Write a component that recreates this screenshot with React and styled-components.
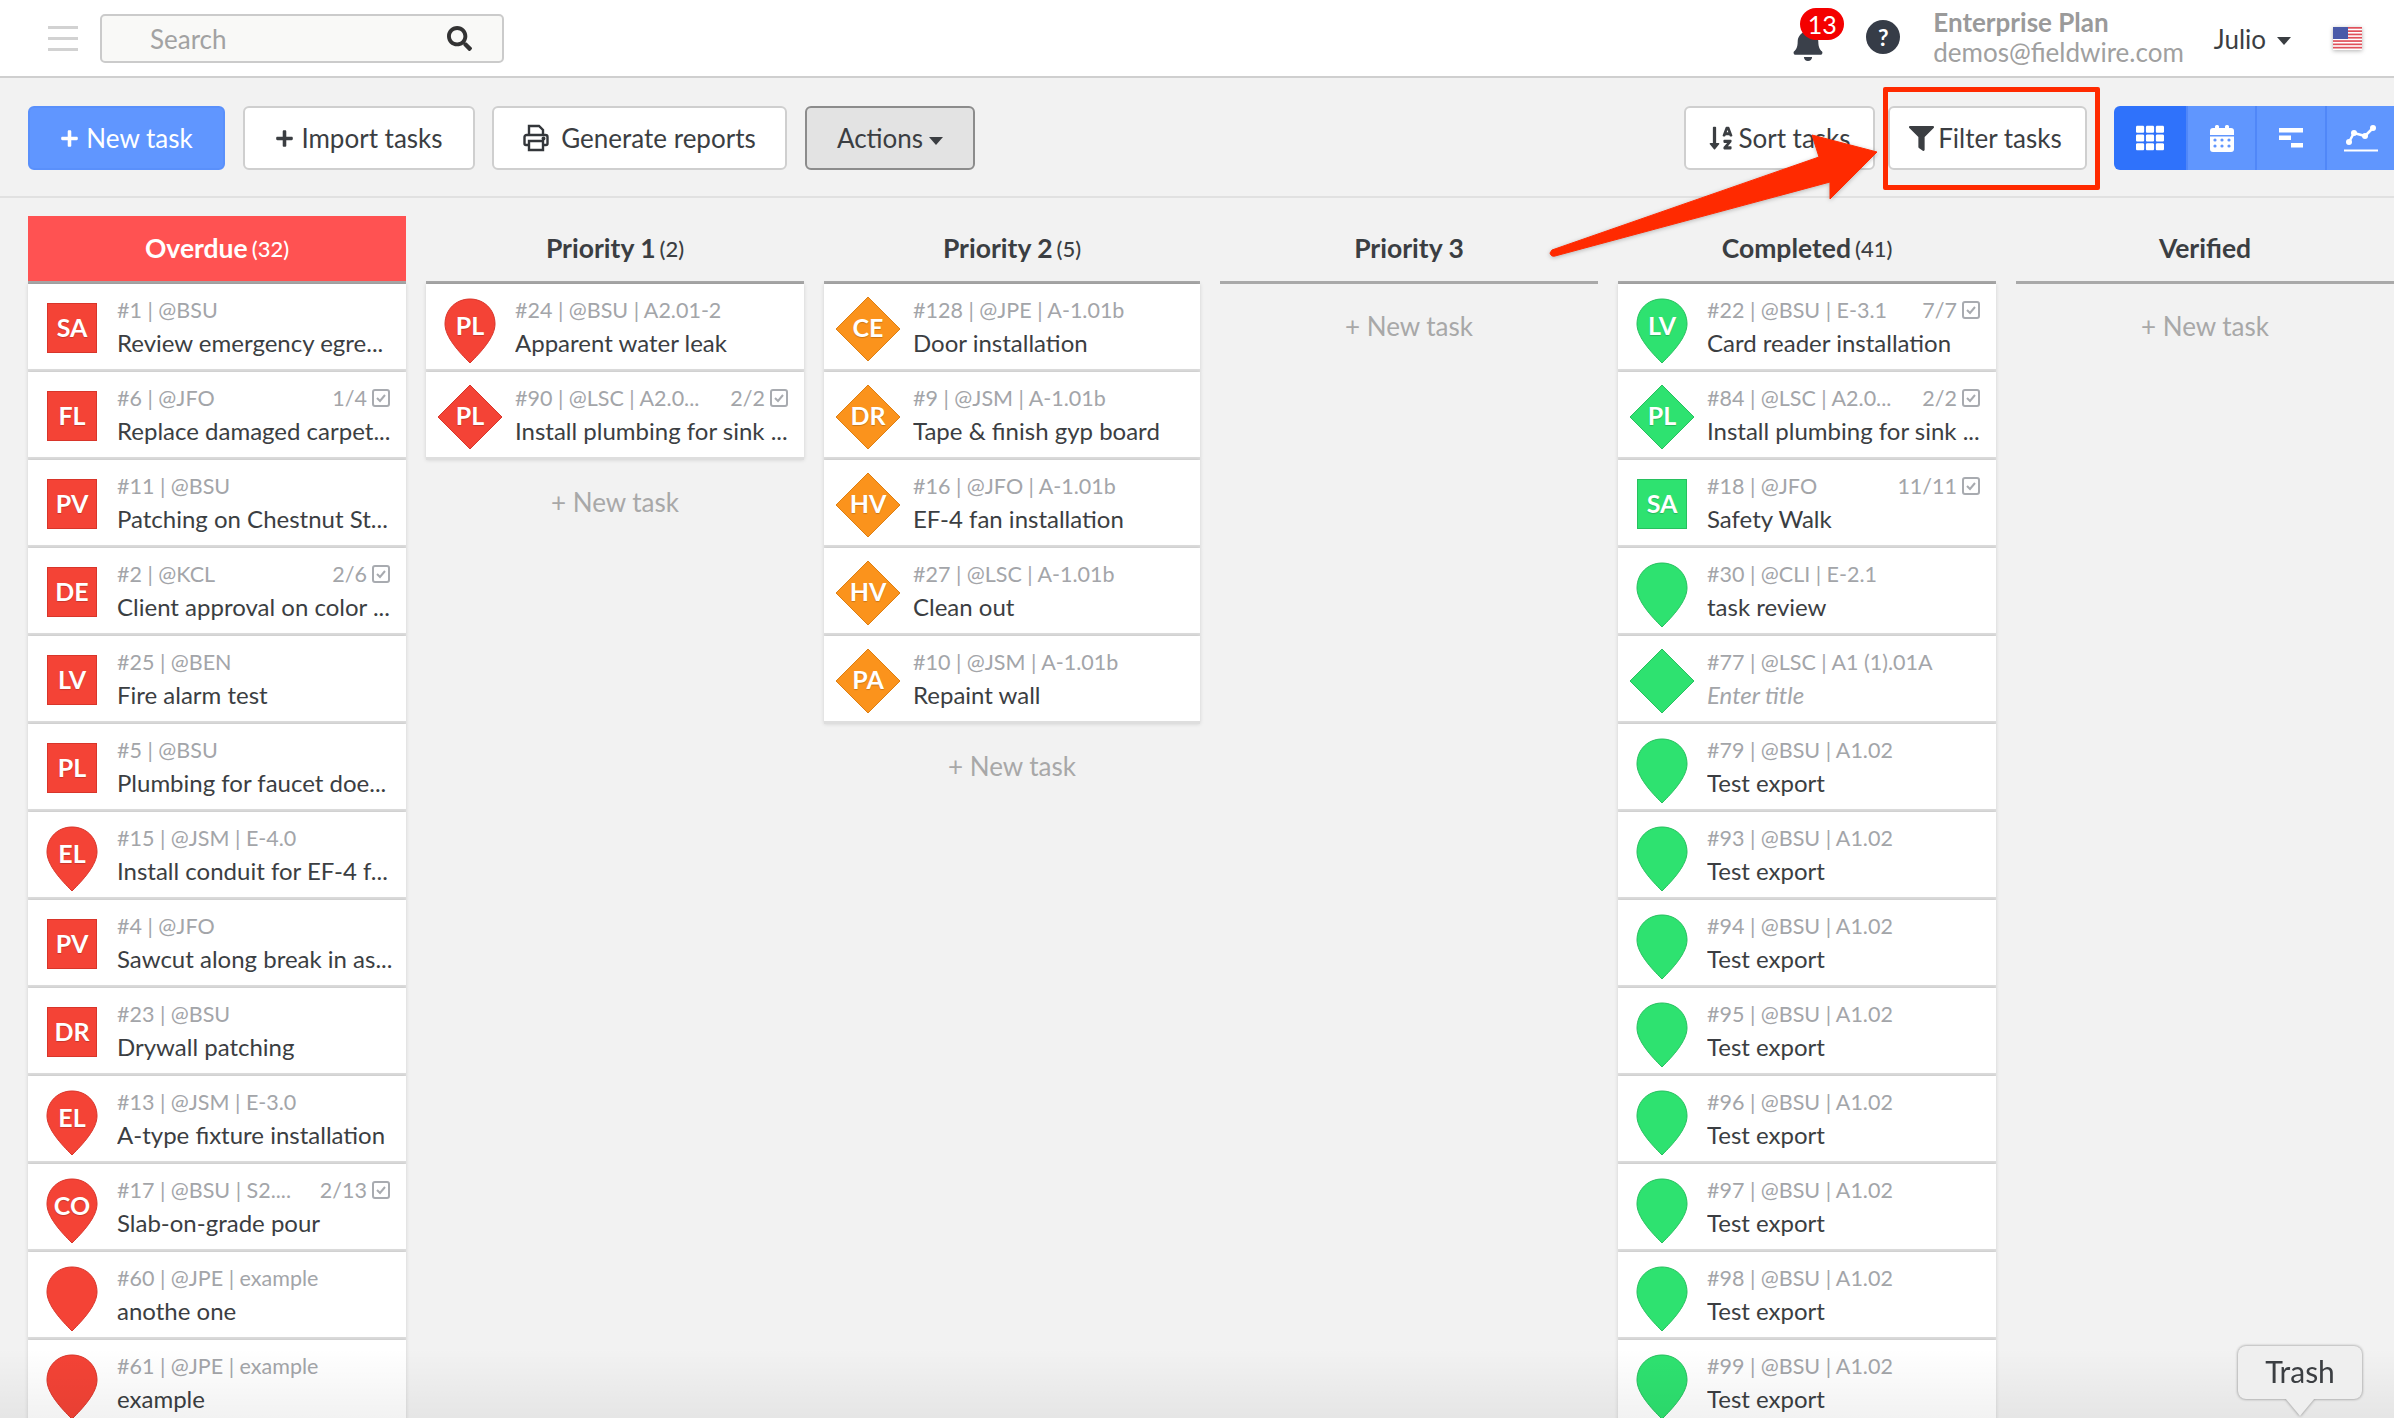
import styled, { createGlobalStyle } from 'styled-components';
import { FaSearch, FaBell, FaFilter, FaPlus, FaTh, FaSortAlphaDown } from 'react-icons/fa';

const GlobalStyle = createGlobalStyle`
  html, body {
    margin: 0;
    padding: 0;
    background: #f2f2f2;
    font-family: Lato, "Open Sans", sans-serif;
    color: #3b3e42;
  }
  * { box-sizing: border-box; }
`;

const colors = {
  red: { fill: '#f44336', edge: '#d8352a' },
  orange: { fill: '#fb931c', edge: '#dd7f13' },
  green: { fill: '#2ee270', edge: '#27c05f' },
};

const Page = styled.div`
  position: relative;
  width: 2394px;
  height: 1418px;
  overflow: hidden;
  background: #f2f2f2;
`;

const TopBar = styled.header`
  display: flex;
  align-items: center;
  height: 78px;
  padding: 1px 32px 0 48px;
  background: #fff;
  border-bottom: 2px solid #cfcfcf;
`;

const Burger = styled.div`
  display: flex;
  flex-direction: column;
  gap: 8px;
  width: 30px;
  margin-right: 22px;
  span {
    height: 3px;
    background: #d2d2d2;
  }
`;

const SearchBox = styled.form`
  display: flex;
  align-items: center;
  width: 404px;
  height: 49px;
  padding: 0 30px 0 48px;
  background: #f9f9f7;
  border: 2px solid #cbcbcb;
  border-radius: 5px;
  color: #333;
  font-size: 25px;
  input {
    flex: 1;
    min-width: 0;
    padding: 0;
    border: 0;
    outline: 0;
    background: transparent;
    font: 26px Lato, sans-serif;
  }
  input::placeholder {
    color: #a2a2a2;
    opacity: 1;
  }
`;

const TopRight = styled.div`
  display: flex;
  align-items: center;
  margin-left: auto;
`;

const BellWrap = styled.div`
  position: relative;
  display: flex;
  width: 30px;
  margin-top: 12px;
  color: #3a404a;
  font-size: 33px;
`;

const Badge = styled.span`
  position: absolute;
  left: 7px;
  top: -20px;
  width: 44px;
  height: 32px;
  border-radius: 16px;
  background: #f40000;
  color: #fff;
  font-size: 25px;
  line-height: 32px;
  text-align: center;
`;

const HelpDot = styled.div`
  width: 34px;
  height: 34px;
  margin: 0 0 3px 43px;
  border-radius: 50%;
  background: #363c47;
  color: #fff;
  font-size: 23px;
  font-weight: 700;
  line-height: 34px;
  text-align: center;
`;

const Plan = styled.div`
  margin: 0 0 3px 33px;
  color: #a0a0a0;
  font-size: 26px;
  line-height: 30px;
  b {
    display: block;
    font-weight: 700;
    color: #9a9a9a;
  }
`;

const User = styled.div`
  display: flex;
  align-items: center;
  gap: 11px;
  margin-left: 30px;
  color: #3b3e42;
  font-size: 26px;
`;

const Caret = styled.i`
  width: 0;
  height: 0;
  margin-top: 5px;
  border-left: 7px solid transparent;
  border-right: 7px solid transparent;
  border-top: 8px solid ${(p) => p.$color || '#3b3e42'};
`;

const Flag = styled.svg`
  display: block;
  width: 29px;
  height: 23px;
  margin-left: 42px;
  filter: blur(0.5px) drop-shadow(0 1px 2px rgba(0, 0, 0, 0.3));
`;

const ToolBar = styled.div`
  display: flex;
  align-items: center;
  height: 120px;
  padding: 2px 0 0 28px;
  border-bottom: 2px solid #e1e1e1;
`;

const Button = styled.button`
  display: flex;
  align-items: center;
  justify-content: center;
  gap: ${(p) => p.$gap || 7}px;
  width: ${(p) => p.$w}px;
  height: 64px;
  margin-right: ${(p) => p.$mr || 0}px;
  padding: 0 ${(p) => p.$pr || 0}px 0 0;
  background: ${(p) => (p.$primary ? '#6096ff' : p.$muted ? '#e3e3e3' : '#fff')};
  border: 2px solid ${(p) => (p.$primary ? '#5a90fb' : p.$muted ? '#8c8c8c' : '#cfcfcf')};
  border-radius: 6px;
  color: ${(p) => (p.$primary ? '#fff' : '#3b3e42')};
  font: 26px Lato, sans-serif;
`;

const Spacer = styled.div`
  flex: 1;
`;

const ViewGroup = styled.div`
  display: flex;
  width: 280px;
  height: 64px;
  margin-left: 27px;
  border-radius: 6px 0 0 6px;
  overflow: hidden;
`;

const ViewTab = styled.div`
  display: flex;
  align-items: center;
  justify-content: center;
  flex: 0 0 ${(p) => p.$w}px;
  background: ${(p) => (p.$active ? '#2f72fb' : '#6096fe')};
  border-left: ${(p) => (p.$active ? 0 : 2)}px solid #5087f8;
  color: #fff;
  font-size: 28px;
`;

const Board = styled.main`
  display: flex;
  gap: 20px;
  padding: 18px 0 0 28px;
`;

const Column = styled.section`
  flex: 0 0 ${(p) => p.$w || 378}px;
  min-width: 0;
`;

const ColumnHead = styled.div`
  display: flex;
  align-items: center;
  justify-content: center;
  gap: 4px;
  height: 68px;
  padding-bottom: 2px;
  background: ${(p) => (p.$alert ? '#ff5252' : 'transparent')};
  border-bottom: 3px solid #a9a9a9;
  color: ${(p) => (p.$alert ? '#fff' : '#3b3e42')};
  font-size: 26.5px;
  font-weight: 700;
  small {
    margin-top: 2px;
    font-size: 22px;
    font-weight: 500;
  }
`;

const Card = styled.article`
  display: flex;
  height: 88px;
  padding: 0 16px 0 11px;
  background: #fff;
  border-bottom: 3px solid #dedede;
  box-shadow: 0 0 4px rgba(0, 0, 0, 0.14);
`;

const IconBox = styled.div`
  display: grid;
  flex: 0 0 66px;
  height: 66px;
  margin: 12px 12px 0 0;
  place-items: center;
  > * {
    grid-area: 1 / 1;
  }
`;

const Square = styled.div`
  width: 50px;
  height: 50px;
  margin-bottom: 2px;
  background: ${(p) => p.$fill};
  border: 1px solid ${(p) => p.$edge};
`;

const PinSvg = styled.svg`
  margin-top: 2px;
`;

const Label = styled.span`
  margin-top: ${(p) => p.$lift}px;
  color: #fff;
  font-size: 25px;
  font-weight: 700;
  line-height: 1;
  text-shadow: 0 1px 1px rgba(0, 0, 0, 0.2);
`;

const Body = styled.div`
  flex: 1;
  min-width: 0;
  padding-top: 9px;
`;

const Meta = styled.div`
  display: flex;
  align-items: center;
  justify-content: space-between;
  height: 33px;
  color: #a3a5a9;
  font-size: 21.5px;
  white-space: nowrap;
`;

const Progress = styled.span`
  display: flex;
  align-items: center;
  gap: 5px;
`;

const Title = styled.div`
  height: 33px;
  margin-right: -8px;
  overflow: hidden;
  color: ${(p) => (p.$empty ? '#a3a5a9' : '#3b3e42')};
  font-size: 24px;
  font-style: ${(p) => (p.$empty ? 'italic' : 'normal')};
  line-height: 33px;
  white-space: nowrap;
`;

const NewTask = styled.div`
  padding-top: 26px;
  color: #a8a8a8;
  font-size: 26px;
  line-height: 32px;
  text-align: center;
`;

const Fade = styled.div`
  position: absolute;
  left: 0;
  right: 0;
  bottom: 0;
  height: 70px;
  background: linear-gradient(rgba(0, 0, 0, 0), rgba(0, 0, 0, 0.05));
  pointer-events: none;
`;

const Trash = styled.div`
  position: absolute;
  left: 2238px;
  top: 1346px;
  width: 124px;
  height: 53px;
  background: #efefef;
  border-radius: 8px;
  filter: drop-shadow(0 0 1.5px rgba(0, 0, 0, 0.45));
  font-size: 30px;
  line-height: 50px;
  text-align: center;
  &::after {
    content: '';
    position: absolute;
    left: 47px;
    top: 52px;
    width: 30px;
    height: 18px;
    background: #efefef;
    clip-path: polygon(0 0, 100% 0, 50% 100%);
  }
`;

const RedBox = styled.div`
  position: absolute;
  left: 1883px;
  top: 87px;
  width: 217px;
  height: 103px;
  border: 5px solid #ff2a00;
  border-radius: 2px;
`;

const Arrow = styled.svg`
  position: absolute;
  left: 1540px;
  top: 125px;
  width: 350px;
  height: 140px;
  filter: drop-shadow(0 1px 2px rgba(0, 0, 0, 0.25));
`;

const Pin = ({ fill, edge }) => (
  <PinSvg width="52" height="66" viewBox="0 0 52 66">
    <path
      d="M26 1C40 1 51 11.500 51 26C51 39 37 54 26 65C15 54 1 39 1 26C1 11.500 12 1 26 1Z"
      fill={fill}
      stroke={edge}
    />
  </PinSvg>
);

const Diamond = ({ fill, edge }) => (
  <svg width="66" height="66" viewBox="0 0 66 66">
    <path d="M33 1L65 33L33 65L1 33Z" fill={fill} stroke={edge} strokeLinejoin="round" />
  </svg>
);

const CheckBox = () => (
  <svg width="18" height="18" viewBox="0 0 18 18">
    <rect x="1" y="1" width="16" height="16" rx="2" fill="none" stroke="#a8abb0" strokeWidth="2" />
    <path d="M5 9l3 3 5-6" fill="none" stroke="#a8abb0" strokeWidth="2" />
  </svg>
);

const PrintIcon = () => (
  <svg width="26" height="28" viewBox="0 0 26 28" fill="none" stroke="#33363a" strokeWidth="2.400">
    <path d="M6 11V2h10l4 4v5" />
    <path d="M6 21H3a1.500 1.500 0 0 1-1.500-1.500V13A2 2 0 0 1 3.500 11h19a2 2 0 0 1 2 2v6.500A1.500 1.500 0 0 1 23 21h-3" />
    <path d="M6 17h14v9H6z" />
    <circle cx="20.500" cy="14.500" r="0.800" fill="#33363a" />
  </svg>
);

const CalendarIcon = () => (
  <svg width="24" height="27" viewBox="0 0 24 27" fill="#fff">
    <rect x="5" y="0" width="4" height="6" rx="1.500" />
    <rect x="15" y="0" width="4" height="6" rx="1.500" />
    <path d="M3 3h18a3 3 0 0 1 3 3v4H0V6a3 3 0 0 1 3-3z" />
    <path d="M0 11.500h24V24a3 3 0 0 1-3 3H3a3 3 0 0 1-3-3z" />
    <g fill="#6096fe">
      {[5, 12, 19].map((x) =>
        [15, 21].map((y) => <circle key={`${x}-${y}`} cx={x} cy={y} r="1.600" />)
      )}
    </g>
  </svg>
);

const GanttIcon = () => (
  <svg width="24" height="20" viewBox="0 0 24 20" fill="#fff">
    <rect x="0" y="0" width="24" height="4.500" />
    <rect x="0" y="7.500" width="12" height="4.500" />
    <rect x="12" y="15" width="12" height="4.500" />
  </svg>
);

const ChartIcon = () => (
  <svg width="34" height="27" viewBox="0 0 34 27" fill="none" stroke="#fff">
    <path d="M5 17L10 8L21 11L29 3" strokeWidth="2.500" />
    <g fill="#fff" stroke="none">
      <circle cx="5" cy="17" r="3" />
      <circle cx="10" cy="8" r="3" />
      <circle cx="21" cy="11" r="3" />
      <circle cx="29" cy="3" r="3" />
    </g>
    <path d="M0 25.500h34" strokeWidth="2" />
  </svg>
);

const stripes = [0, 1, 2, 3, 4, 5, 6];

const UsFlag = () => (
  <Flag viewBox="0 0 29 23">
    <rect width="29" height="23" fill="#fff" />
    {stripes.map((i) => (
      <rect key={i} y={i * 3.3} width="29" height="1.700" fill="#e0505a" />
    ))}
    <rect width="15" height="12" fill="#4a5aa8" />
  </Flag>
);

const shapes = { pin: Pin, diamond: Diamond };
const labelLift = { pin: -9, diamond: -3, square: -4 };

function TaskIcon({ shape, tone, code }) {
  const { fill, edge } = colors[tone];
  const Shape = shapes[shape];
  return (
    <IconBox>
      {Shape ? <Shape fill={fill} edge={edge} /> : <Square $fill={fill} $edge={edge} />}
      {code && <Label $lift={labelLift[shape]}>{code}</Label>}
    </IconBox>
  );
}

function Task({ tone, shape, code, meta, count, title, empty }) {
  return (
    <Card>
      <TaskIcon shape={shape} tone={tone} code={code} />
      <Body>
        <Meta>
          <span>{meta}</span>
          {count && (
            <Progress>
              {count}
              <CheckBox />
            </Progress>
          )}
        </Meta>
        <Title $empty={empty}>{title}</Title>
      </Body>
    </Card>
  );
}

const overdue = [
  ['square', 'SA', '#1 | @BSU', null, 'Review emergency egre...'],
  ['square', 'FL', '#6 | @JFO', '1/4', 'Replace damaged carpet...'],
  ['square', 'PV', '#11 | @BSU', null, 'Patching on Chestnut St...'],
  ['square', 'DE', '#2 | @KCL', '2/6', 'Client approval on color ...'],
  ['square', 'LV', '#25 | @BEN', null, 'Fire alarm test'],
  ['square', 'PL', '#5 | @BSU', null, 'Plumbing for faucet doe...'],
  ['pin', 'EL', '#15 | @JSM | E-4.0', null, 'Install conduit for EF-4 f...'],
  ['square', 'PV', '#4 | @JFO', null, 'Sawcut along break in as...'],
  ['square', 'DR', '#23 | @BSU', null, 'Drywall patching'],
  ['pin', 'EL', '#13 | @JSM | E-3.0', null, 'A-type fixture installation'],
  ['pin', 'CO', '#17 | @BSU | S2....', '2/13', 'Slab-on-grade pour'],
  ['pin', '', '#60 | @JPE | example', null, 'anothe one'],
  ['pin', '', '#61 | @JPE | example', null, 'example'],
];

const priorityOne = [
  ['pin', 'PL', '#24 | @BSU | A2.01-2', null, 'Apparent water leak'],
  ['diamond', 'PL', '#90 | @LSC | A2.0...', '2/2', 'Install plumbing for sink ...'],
];

const priorityTwo = [
  ['diamond', 'CE', '#128 | @JPE | A-1.01b', null, 'Door installation'],
  ['diamond', 'DR', '#9 | @JSM | A-1.01b', null, 'Tape & finish gyp board'],
  ['diamond', 'HV', '#16 | @JFO | A-1.01b', null, 'EF-4 fan installation'],
  ['diamond', 'HV', '#27 | @LSC | A-1.01b', null, 'Clean out'],
  ['diamond', 'PA', '#10 | @JSM | A-1.01b', null, 'Repaint wall'],
];

const testExports = [79, 93, 94, 95, 96, 97, 98, 99].map((n) => [
  'pin',
  '',
  `#${n} | @BSU | A1.02`,
  null,
  'Test export',
]);

const completed = [
  ['pin', 'LV', '#22 | @BSU | E-3.1', '7/7', 'Card reader installation'],
  ['diamond', 'PL', '#84 | @LSC | A2.0...', '2/2', 'Install plumbing for sink ...'],
  ['square', 'SA', '#18 | @JFO', '11/11', 'Safety Walk'],
  ['pin', '', '#30 | @CLI | E-2.1', null, 'task review'],
  ['diamond', '', '#77 | @LSC | A1 (1).01A', null, 'Enter title', true],
  ...testExports,
];

const columns = [
  { name: 'Overdue', count: 32, tone: 'red', rows: overdue, alert: true },
  { name: 'Priority 1', count: 2, tone: 'red', rows: priorityOne, add: true },
  { name: 'Priority 2', count: 5, tone: 'orange', rows: priorityTwo, add: true, w: 376 },
  { name: 'Priority 3', rows: [], add: true },
  { name: 'Completed', count: 41, tone: 'green', rows: completed },
  { name: 'Verified', rows: [], add: true },
];

export default function App() {
  return (
    <Page>
      <GlobalStyle />
      <TopBar>
        <Burger>
          <span />
          <span />
          <span />
        </Burger>
        <SearchBox onSubmit={(e) => e.preventDefault()}>
          <input placeholder="Search" />
          <FaSearch />
        </SearchBox>
        <TopRight>
          <BellWrap>
            <FaBell />
            <Badge>13</Badge>
          </BellWrap>
          <HelpDot>?</HelpDot>
          <Plan>
            <b>Enterprise Plan</b>
            demos@fieldwire.com
          </Plan>
          <User>
            Julio
            <Caret />
          </User>
          <UsFlag />
        </TopRight>
      </TopBar>

      <ToolBar>
        <Button $primary $w={197} $mr={18}>
          <FaPlus size={19} />
          New task
        </Button>
        <Button $w={232} $mr={17}>
          <FaPlus size={19} />
          Import tasks
        </Button>
        <Button $w={295} $mr={18} $gap={12}>
          <PrintIcon />
          Generate reports
        </Button>
        <Button $muted $w={170} $gap={6}>
          Actions
          <Caret />
        </Button>
        <Spacer />
        <Button $w={191} $mr={13} $gap={4}>
          <FaSortAlphaDown size={26} />
          Sort tasks
        </Button>
        <Button $w={199} $gap={4} $pr={4}>
          <FaFilter size={25} />
          Filter tasks
        </Button>
        <ViewGroup>
          <ViewTab $active $w={72}>
            <FaTh />
          </ViewTab>
          <ViewTab $w={69}>
            <CalendarIcon />
          </ViewTab>
          <ViewTab $w={70}>
            <GanttIcon />
          </ViewTab>
          <ViewTab $w={69}>
            <ChartIcon />
          </ViewTab>
        </ViewGroup>
      </ToolBar>

      <Board>
        {columns.map((col) => (
          <Column key={col.name} $w={col.w}>
            <ColumnHead $alert={col.alert}>
              {col.name}
              {col.count && <small>({col.count})</small>}
            </ColumnHead>
            {col.rows.map(([shape, code, meta, count, title, empty]) => (
              <Task
                key={meta}
                tone={col.tone}
                shape={shape}
                code={code}
                meta={meta}
                count={count}
                title={title}
                empty={empty}
              />
            ))}
            {col.add && <NewTask>+ New task</NewTask>}
          </Column>
        ))}
      </Board>

      <Fade />
      <Trash>Trash</Trash>
      <RedBox />
      <Arrow viewBox="0 0 350 140">
        <path
          d="M10 128Q11 132 15 131L290 57L290 74L337 27L272 10L279 32L12 125Z"
          fill="#ff2a00"
          stroke="#ff2a00"
          strokeLinejoin="round"
        />
      </Arrow>
    </Page>
  );
}
